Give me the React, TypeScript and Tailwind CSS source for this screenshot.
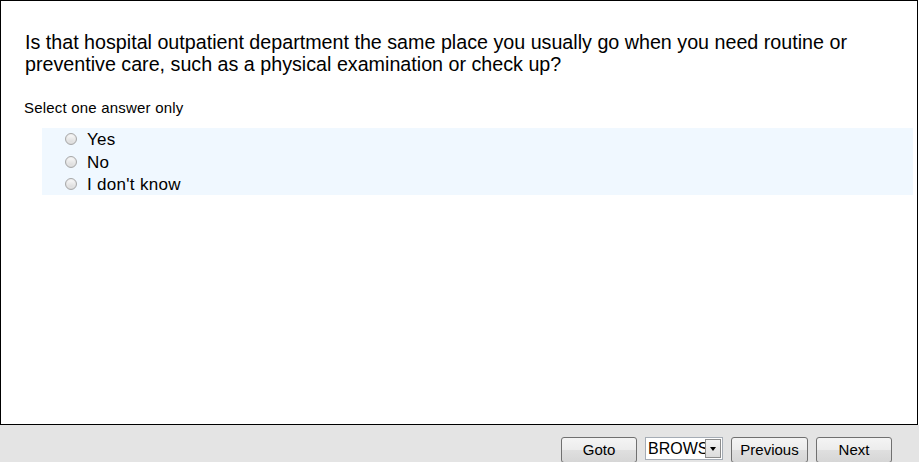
const answers = ['Yes', 'No', "I don't know"]

function Radio() {
  return (
    <span className="flex h-[12px] w-[12px] items-center justify-center rounded-full border border-[#a8a8a8] bg-[radial-gradient(circle_at_50%_35%,#ffffff_0%,#e6e6e6_55%,#c8c8c8_100%)]">
      <span className="h-[6px] w-[6px] rounded-full bg-[linear-gradient(#f4f4f4,#dcdcdc)]" />
    </span>
  )
}

function NavButton({ label, width = 'w-[76px]' }: { label: string; width?: string }) {
  return (
    <button
      type="button"
      className={`h-[26px] ${width} shrink-0 rounded-[3px] border border-[#707070] bg-[linear-gradient(#f4f4f4_0%,#ececec_50%,#dfdfdf_51%,#d6d6d6_100%)] text-[15px] leading-[24px] text-black`}
    >
      {label}
    </button>
  )
}

function ModeSelect() {
  return (
    <div className="flex h-[23px] w-[78px] shrink-0 items-center border border-[#a5acb5] bg-white">
      <div className="h-full w-[59px] overflow-hidden whitespace-nowrap pl-[2px] text-[16px] leading-[21px] text-black">
        BROWSE
      </div>
      <div className="ml-auto mr-[1px] flex h-[19px] w-[16px] items-center justify-center border border-[#8c8c8c] bg-[linear-gradient(#f3f3f3,#dcdcdc)]">
        <span className="h-0 w-0 border-x-[3.5px] border-t-[4px] border-x-transparent border-t-black" />
      </div>
    </div>
  )
}

export default function App() {
  return (
    <div className="h-[462px] w-[919px] overflow-hidden bg-white font-['Liberation_Sans',Arial,sans-serif] text-black">
      <div className="h-[425px] w-[918px] border border-black bg-white pt-[30px]">
        <p className="pl-[24px] pr-[24px] text-[19.7px] leading-[22px]">
          Is that hospital outpatient department the same place you usually go when you need routine or
          preventive care, such as a physical examination or check up?
        </p>
        <p className="mt-[25px] pl-[23px] text-[15px] leading-[16px] tracking-[0.2px]">Select one answer only</p>
        <div className="ml-[41px] mt-[12px] h-[67px] w-[871px] bg-[#f0f8ff] pt-[1px]">
          {answers.map((answer) => (
            <div
              key={answer}
              className="flex h-[22.5px] items-center text-[17px] leading-[22.5px] tracking-[0.3px]"
            >
              <span className="ml-[23px] mr-[10px] mt-[-2px]">
                <Radio />
              </span>
              <span>{answer}</span>
            </div>
          ))}
        </div>
      </div>
      <div className="flex h-[37px] items-start justify-end gap-[8px] bg-[#e4e4e4] pr-[27px] pt-[12px]">
        <NavButton label="Goto" />
        <ModeSelect />
        <NavButton label="Previous" width="w-[77px]" />
        <NavButton label="Next" />
      </div>
    </div>
  )
}
